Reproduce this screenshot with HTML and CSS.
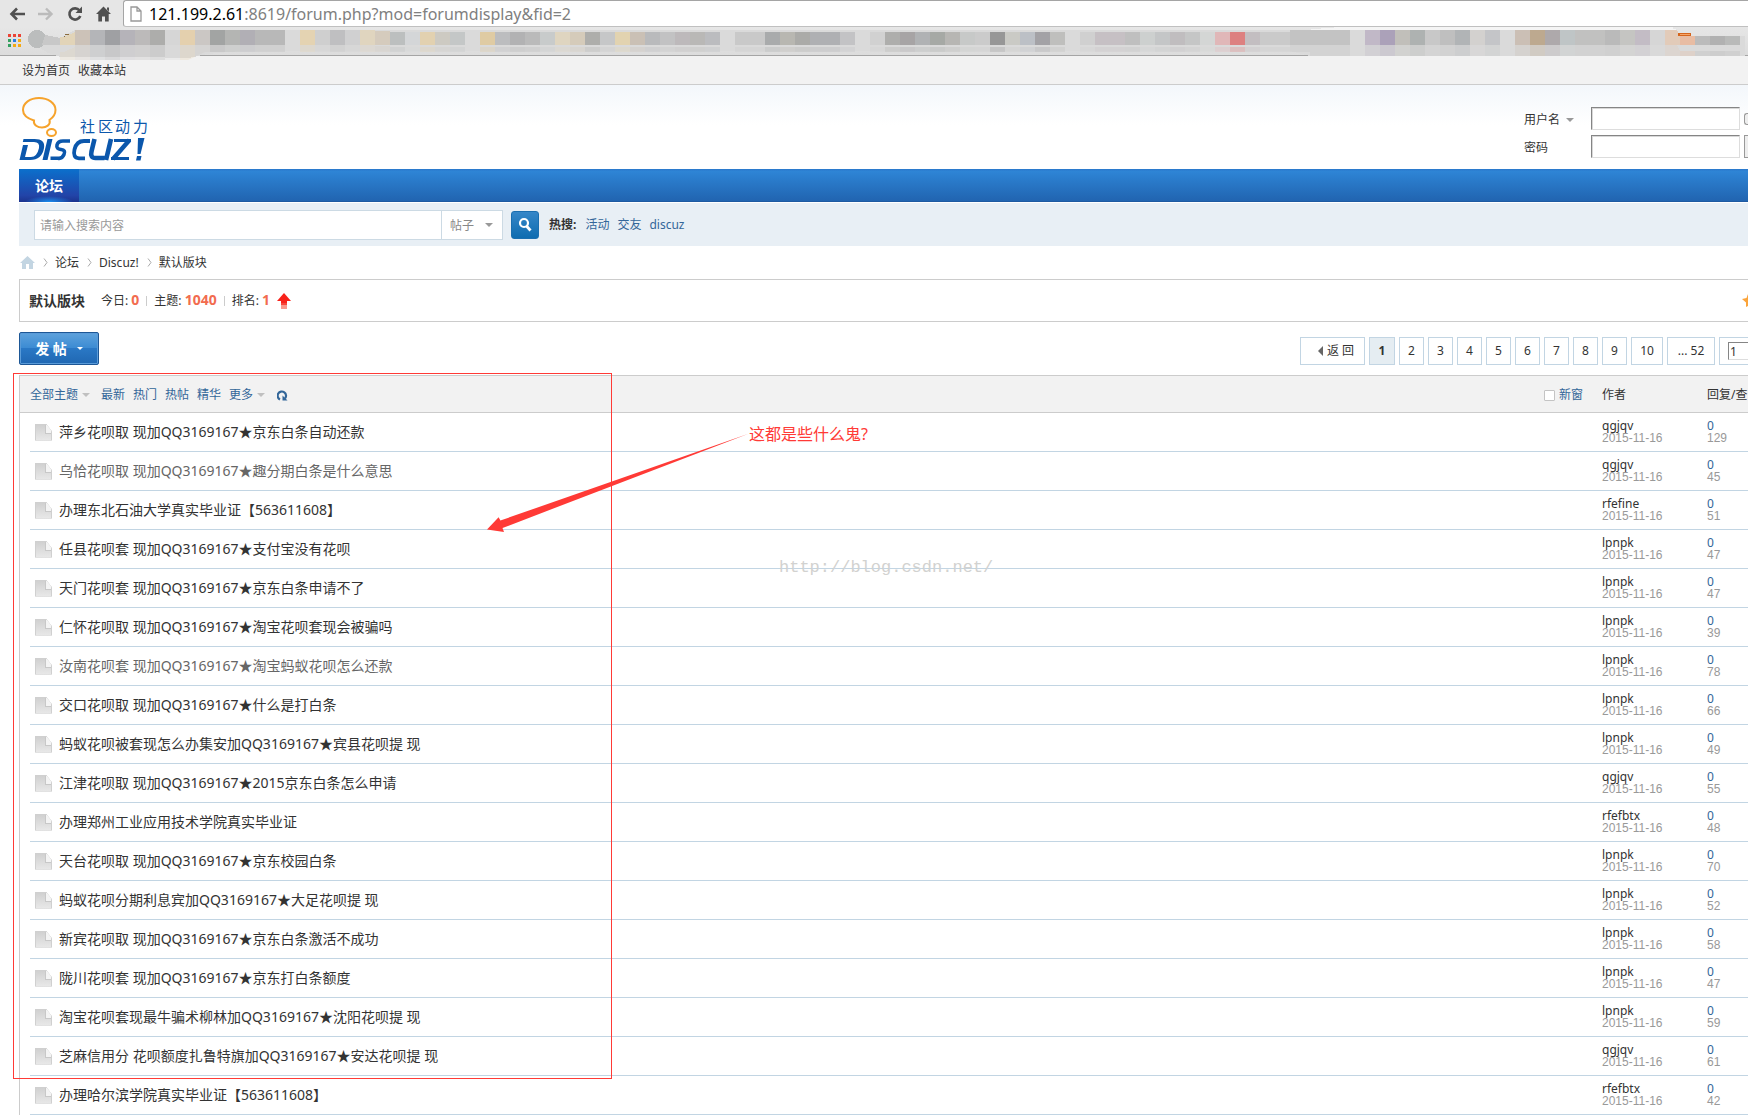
FILE: index.html
```html
<!DOCTYPE html>
<html lang="zh-CN">
<head>
<meta charset="utf-8">
<title>默认版块 - Discuz!</title>
<link rel="stylesheet" href="styles.css">
</head>
<body>
<header class="browser">
  <div class="toolbar">
    <div class="tools">
      <svg width="16" height="14" viewBox="0 0 16 14"><path d="M8 1.500L2.500 7L8 12.500M3 7h13" fill="none" stroke="#505050" stroke-width="2.600"/></svg>
      <svg width="16" height="14" viewBox="0 0 16 14"><path d="M8 1.500L13.500 7L8 12.500M0 7h13" fill="none" stroke="#bbb" stroke-width="2.400"/></svg>
      <svg width="16" height="16" viewBox="0 0 16 16"><path d="M12.500 4.500A5.600 5.600 0 1 0 13.300 10" fill="none" stroke="#505050" stroke-width="2.600"/><path d="M15 0.500v6.500H8.500z" fill="#505050"/></svg>
      <svg width="15" height="16" viewBox="0 0 15 16"><path d="M7.500 0.500L15 8h-2.300v7.500H9v-5H6v5H2.300V8H0zM11 1.500h2v4l-2-2z" fill="#505050"/></svg>
    </div>
    <div class="address">
      <svg width="12" height="16" viewBox="0 0 12 16"><path d="M1 1h6l4 4v10H1zM7 1v4h4" fill="#fff" stroke="#999" stroke-width="1.300"/></svg>
      <span class="url"><b>121.199.2.61</b>:8619/forum.php?mod=forumdisplay&amp;fid=2</span>
    </div>
  </div>
  <div class="bookmarks">
    <svg class="apps" width="13" height="13" viewBox="0 0 13 13"><path fill="#ea4335" d="M0 0h3v3H0zM5 0h3v3H5zM10 0h3v3h-3z"/><path fill="#34a060" d="M0 5h3v3H0zM0 10h3v3H0z"/><path fill="#2a7de1" d="M5 5h3v3H5z"/><path fill="#f4a913" d="M10 5h3v3h-3zM5 10h3v3H5zM10 10h3v3h-3z"/></svg>
    <svg class="mosaic" width="1748" height="34" viewBox="0 27 1748 34" shape-rendering="crispEdges">
      <path fill="#dadada" d="M35 45h25v-7l15-8h1230l120-1h228l25 7h67v20H1310l-20-5H240l-33 3-18 4h-24v-1H60l-12-4z"/>
      <path fill="#f5f5f5" d="M1354 26h319v3l5 1h-370l6-1z"/>
      <circle cx="37" cy="39" r="9" fill="#bbbdbd"/><path fill="#c8c8c8" d="M45 35l15 3v7H42z"/><path fill="#8a6d40" d="M65 34h6v1h-6zM64 36h2v2h-2z"/>
      <g id="tiles">
        <path fill="#e2d4b8" d="M60 37h4l11-5v13H60z"/><path fill="#ccc2b8" d="M75 30h15v15H75z"/><path fill="#b4b5b8" d="M90 30h15v15H90z"/><path fill="#9fa0a3" d="M105 30h15v15h-15z"/><path fill="#b5b3b9" d="M120 30h15v15h-15z"/><path fill="#bcbaba" d="M135 30h15v15h-15z"/><path fill="#adadab" d="M150 30h15v15h-15z"/><path fill="#d6d6d6" d="M165 30h15v15h-15z"/><path fill="#e4d0ae" d="M180 30h15v15h-15z"/><path fill="#cbc7c4" d="M195 30h15v15h-15z"/><path fill="#a2a4a3" d="M210 30h15v15h-15z"/><path fill="#b4b5b3" d="M225 30h15v15h-15z"/><path fill="#b1afb5" d="M240 30h15v15h-15z"/><path fill="#b8b8b8" d="M255 30h30v15h-30z"/><path fill="#e4d3b2" d="M300 30h15v15h-15z"/><path fill="#cfcfcf" d="M315 30h15v15h-15z"/><path fill="#bfbfc1" d="M330 30h15v15h-15z"/><path fill="#d0d0d1" d="M345 30h15v15h-15z"/><path fill="#e0d5bf" d="M360 30h15v15h-15z"/><path fill="#d5cbbd" d="M375 31h15v14h-15z"/>
        <path fill="#bcbfbf" d="M390 32h15v13h-15z"/><path fill="#d4d6d8" d="M405 32h15v13h-15z"/><path fill="#e2d1b0" d="M420 32h15v13h-15z"/><path fill="#cdcac2" d="M435 32h15v13h-15z"/><path fill="#c4c7c7" d="M450 32h15v13h-15z"/><path fill="#dfcba3" d="M480 32h15v13h-15z"/><path fill="#bcbdbf" d="M495 32h15v13h-15z"/><path fill="#b2b2b3" d="M510 32h15v13h-15z"/><path fill="#bababa" d="M525 32h15v13h-15z"/><path fill="#c8cbcb" d="M540 32h15v13h-15z"/><path fill="#dfd5c0" d="M555 32h15v13h-15z"/><path fill="#d5cbba" d="M570 32h15v13h-15z"/><path fill="#aeaeab" d="M585 32h15v13h-15z"/>
        <path fill="#c6c7c8" d="M600 32h15v13h-15z"/><path fill="#e2d3b0" d="M615 32h15v13h-15z"/><path fill="#cac0b5" d="M630 32h15v13h-15z"/><path fill="#b9babc" d="M645 32h15v13h-15z"/><path fill="#c2c2c3" d="M660 32h15v13h-15z"/><path fill="#bdb9bb" d="M675 32h15v13h-15z"/><path fill="#b9b8b6" d="M690 32h15v13h-15z"/><path fill="#bbbcbf" d="M705 32h15v13h-15z"/><path fill="#c9c9c9" d="M735 32h30v13h-30z"/><path fill="#a9abac" d="M765 32h15v13h-15z"/><path fill="#b8b7b1" d="M780 32h15v13h-15z"/><path fill="#ababa8" d="M795 32h15v13h-15z"/><path fill="#afb0b3" d="M810 32h30v13h-30z"/><path fill="#c3c3c5" d="M840 32h15v13h-15z"/><path fill="#d1d1d1" d="M870 32h15v13h-15z"/><path fill="#aeaeac" d="M885 32h15v13h-15z"/><path fill="#a7a4a5" d="M900 32h15v13h-15z"/><path fill="#b0b2b4" d="M915 32h15v13h-15z"/><path fill="#a6a9a5" d="M930 32h15v13h-15z"/><path fill="#b7b6b3" d="M945 32h15v13h-15z"/><path fill="#c7c9c8" d="M960 32h15v13h-15z"/><path fill="#cbcbcb" d="M975 32h15v13h-15z"/><path fill="#979797" d="M990 32h15v13h-15z"/>
        <path fill="#cacac5" d="M1005 32h15v13h-15z"/><path fill="#bcc0c6" d="M1020 32h15v13h-15z"/><path fill="#a3a2a6" d="M1035 32h15v13h-15z"/><path fill="#bfbfbd" d="M1050 32h15v13h-15z"/><path fill="#d0d0d0" d="M1080 32h15v13h-15z"/><path fill="#c6c0c4" d="M1095 32h30v13h-30z"/><path fill="#bfbfbf" d="M1125 32h15v13h-15z"/><path fill="#cdd0cf" d="M1140 32h15v13h-15z"/><path fill="#c4c6c7" d="M1155 32h15v13h-15z"/><path fill="#c0bdbf" d="M1170 32h15v13h-15z"/><path fill="#c5c6c6" d="M1185 32h15v13h-15z"/><path fill="#d4d6d5" d="M1200 32h15v13h-15z"/><path fill="#e0b7b8" d="M1215 32h15v13h-15z"/><path fill="#dd8080" d="M1230 32h15v13h-15z"/><path fill="#c3bec1" d="M1245 32h15v13h-15z"/><path fill="#cacaca" d="M1260 32h30v13h-30z"/><path fill="#c3c3c3" d="M1290 30h60v15h-60z"/>
        <path fill="#c1b8c7" d="M1365 30h15v15h-15z"/><path fill="#aba1b9" d="M1380 30h15v15h-15z"/><path fill="#c1bfba" d="M1395 30h15v15h-15z"/><path fill="#aeb2b1" d="M1410 30h15v15h-15z"/><path fill="#c8c8c8" d="M1425 30h15v15h-15z"/><path fill="#bfbfbf" d="M1440 30h15v15h-15z"/><path fill="#b1b4b6" d="M1455 30h15v15h-15z"/><path fill="#d3d1cf" d="M1470 30h15v15h-15z"/><path fill="#c4c5c8" d="M1485 30h15v15h-15z"/><path fill="#cbbfb5" d="M1515 30h15v15h-15z"/><path fill="#bda98f" d="M1530 30h15v15h-15z"/><path fill="#aea9ab" d="M1545 30h15v15h-15z"/><path fill="#bfc5c6" d="M1560 30h15v15h-15z"/><path fill="#c1c1c0" d="M1575 30h30v15h-30z"/><path fill="#bababa" d="M1605 30h15v15h-15z"/><path fill="#c5c5c2" d="M1620 30h15v15h-15z"/><path fill="#c3bcc5" d="M1635 30h15v15h-15z"/><path fill="#d6d6d6" d="M1650 30h15v15h-15z"/><path fill="#e2cbb9" d="M1665 30h12l3 6v9h-15z"/><path fill="#e8bca3" d="M1680 36h15v9h-15z"/><path fill="#bbb" d="M1695 36h15v9h-15z"/><path fill="#b1b1b1" d="M1710 36h15v9h-15z"/><path fill="#b9bab9" d="M1725 36h15v9h-15z"/>
      </g>
      <clipPath id="lower"><path d="M60 45h1688v11H1310v-4H205l-17 8H60z"/></clipPath>
      <g clip-path="url(#lower)"><use href="#tiles" y="15" opacity="0.3"/></g>
      <path fill="#d5651d" d="M1678 33h13v3h-13z"/><path fill="#f5a56a" d="M1680 34h10v1h-10z"/>
    </svg>
  </div>
</header>

<nav class="topbar"><a href="#">设为首页</a><a href="#">收藏本站</a></nav>

<header class="masthead">
  <a href="#" class="logo" aria-label="Discuz! 社区动力">
    <svg width="130" height="68" viewBox="0 0 130 68">
      <g fill="none" stroke="#f6a32c" stroke-width="2"><path d="M15 23.500C7 21 4 17 4 13C4 6 11 1 20 1S36.500 6 36.500 13C36.500 17 34 20.500 30.500 23C32 28 27 30.500 23 30.500S14 28 15 23.500z"/><ellipse cx="32.500" cy="35.500" rx="4.500" ry="3.500"/></g>
      <text class="logo-cn" x="61" y="35">社</text><text class="logo-cn" x="79" y="35">区</text><text class="logo-cn" x="96" y="35">动</text><text class="logo-cn" x="114" y="35">力</text>
      <path fill="#0b57ac" fill-rule="evenodd" d="M4.500 42h11q11 0 9.500 9q-2 12-14 12H0.500L4 48h5l-3 12h6q6 0 8-9q1-6-5-6H3.800zM28.500 42h5l-5 21h-5zM119 41h6.500l-4 16h-3zM118 59h4.500l-1 4.500H117z"/>
      <g fill="none" stroke="#0b57ac"><path stroke-width="3.600" d="M51 44h-7q-5 0-6 4t4 4.500t3 5t-6 3.700h-7.500"/><path stroke-width="3.800" d="M71 44h-6q-7.500 0-9.500 8.500t4.500 8.800h6"/><path stroke-width="4.600" d="M75.500 42l-3 12.500q-1.500 6.500 4 6.500h9M92 42l-5 21"/><path stroke-width="3" d="M95 43.500h17M92 61.500h18"/><path stroke-width="4.400" d="M110.500 43L94 62"/></g>
    </svg>
  </a>
  <form class="login">
    <div class="login-row"><label for="user">用户名<i class="caret"></i></label><input id="user" type="text"><button type="button" class="peek peek-check" aria-label="自动登录"></button></div>
    <div class="login-row"><label for="pass">密码</label><input id="pass" type="password"><button type="button" class="peek" aria-label="登录"></button></div>
  </form>
</header>

<main class="page">
  <nav class="mainnav"><a href="#">论坛</a></nav>
  <form class="search">
    <div class="searchbox">
      <input type="text" placeholder="请输入搜索内容" aria-label="搜索">
      <div class="scope"><select aria-label="范围"><option>帖子</option></select><i class="caret"></i></div>
    </div>
    <button type="button" class="go" aria-label="搜索"><svg width="16" height="16" viewBox="0 0 16 16"><circle cx="7" cy="6" r="4" fill="none" stroke="#fff" stroke-width="2.200"/><path d="M9.500 9l4 4.500" stroke="#fff" stroke-width="2.800"/></svg></button>
    <div class="hot"><b>热搜:</b><a href="#">活动</a><a href="#">交友</a><a href="#">discuz</a></div>
  </form>
  <nav class="crumbs">
    <a href="#" aria-label="首页"><svg width="15" height="13" viewBox="0 0 15 13"><path d="M7.500 0L15 7h-2v6H9V8H6v5H2V7H0z" fill="#c3d5e2"/></svg></a>
    <svg class="sep" width="5" height="9" viewBox="0 0 5 9"><path d="M1 0.500l3 4-3 4" fill="none" stroke="#aaa"/></svg>
    <a href="#">论坛</a>
    <svg class="sep" width="5" height="9" viewBox="0 0 5 9"><path d="M1 0.500l3 4-3 4" fill="none" stroke="#aaa"/></svg>
    <a href="#">Discuz!</a>
    <svg class="sep" width="5" height="9" viewBox="0 0 5 9"><path d="M1 0.500l3 4-3 4" fill="none" stroke="#aaa"/></svg>
    <a href="#">默认版块</a>
  </nav>
  <section class="board">
    <h1>默认版块</h1>
    <p class="stats"><span>今日: <b>0</b></span><i></i><span>主题: <b>1040</b></span><i></i><span>排名: <b>1</b></span>
      <svg width="14" height="16" viewBox="0 0 14 16"><path d="M7 0l7 8h-4v2H4V8H0z" fill="#f8221a"/><path d="M4 10h6v2H4z" fill="#f8453a"/><path d="M4 12h6v4H4z" fill="#f9988c"/></svg></p>
    <svg class="fav" width="6" height="14" viewBox="0 0 6 14"><path d="M6 0v12l-2 1 0-4.500L0 5l4.500-1z" fill="#fba43a"/></svg>
  </section>
  <div class="actions">
    <button type="button" class="post"><span>发 帖</span><i></i></button>
    <nav class="pages">
      <a href="#" class="back"><i></i>返 回</a><strong>1</strong><a href="#">2</a><a href="#">3</a><a href="#">4</a><a href="#">5</a><a href="#">6</a><a href="#">7</a><a href="#">8</a><a href="#">9</a><a href="#" class="ten">10</a><a href="#" class="last">... 52</a><span class="jump"><input type="text" value="1" aria-label="页码"></span>
    </nav>
  </div>
  <div class="threads">
    <table>
      <colgroup><col class="c-edge"><col><col class="c-by"><col class="c-num"></colgroup>
      <thead><tr><th></th><th>
        <div class="filters"><a href="#" class="drop all">全部主题<i class="caret"></i></a><a href="#">最新</a><a href="#">热门</a><a href="#">热帖</a><a href="#">精华</a><a href="#" class="drop">更多<i class="caret"></i></a>
          <a href="#" class="refresh" aria-label="刷新"><svg width="11" height="11" viewBox="0 0 11 11"><path d="M3 9.500A4.200 4.200 0 1 1 8 8.500" fill="none" stroke="#369" stroke-width="2.200"/><path d="M5.500 5.500v5h5z" fill="#369"/></svg></a>
          <label class="newwin"><input type="checkbox">新窗</label></div>
      </th><th>作者</th><th>回复/查</th></tr></thead>
      <tbody>
        <tr><td></td><td><a href="#">萍乡花呗取 现加QQ3169167★京东白条自动还款</a></td><td><a href="#">qgjqv</a><small>2015-11-16</small></td><td><a href="#">0</a><small>129</small></td></tr>
        <tr class="read"><td></td><td><a href="#">乌恰花呗取 现加QQ3169167★趣分期白条是什么意思</a></td><td><a href="#">qgjqv</a><small>2015-11-16</small></td><td><a href="#">0</a><small>45</small></td></tr>
        <tr><td></td><td><a href="#">办理东北石油大学真实毕业证【563611608】</a></td><td><a href="#">rfefine</a><small>2015-11-16</small></td><td><a href="#">0</a><small>51</small></td></tr>
        <tr><td></td><td><a href="#">任县花呗套 现加QQ3169167★支付宝没有花呗</a></td><td><a href="#">lpnpk</a><small>2015-11-16</small></td><td><a href="#">0</a><small>47</small></td></tr>
        <tr><td></td><td><a href="#">天门花呗套 现加QQ3169167★京东白条申请不了</a></td><td><a href="#">lpnpk</a><small>2015-11-16</small></td><td><a href="#">0</a><small>47</small></td></tr>
        <tr><td></td><td><a href="#">仁怀花呗取 现加QQ3169167★淘宝花呗套现会被骗吗</a></td><td><a href="#">lpnpk</a><small>2015-11-16</small></td><td><a href="#">0</a><small>39</small></td></tr>
        <tr class="read"><td></td><td><a href="#">汝南花呗套 现加QQ3169167★淘宝蚂蚁花呗怎么还款</a></td><td><a href="#">lpnpk</a><small>2015-11-16</small></td><td><a href="#">0</a><small>78</small></td></tr>
        <tr><td></td><td><a href="#">交口花呗取 现加QQ3169167★什么是打白条</a></td><td><a href="#">lpnpk</a><small>2015-11-16</small></td><td><a href="#">0</a><small>66</small></td></tr>
        <tr><td></td><td><a href="#">蚂蚁花呗被套现怎么办集安加QQ3169167★宾县花呗提 现</a></td><td><a href="#">lpnpk</a><small>2015-11-16</small></td><td><a href="#">0</a><small>49</small></td></tr>
        <tr><td></td><td><a href="#">江津花呗取 现加QQ3169167★2015京东白条怎么申请</a></td><td><a href="#">qgjqv</a><small>2015-11-16</small></td><td><a href="#">0</a><small>55</small></td></tr>
        <tr><td></td><td><a href="#">办理郑州工业应用技术学院真实毕业证</a></td><td><a href="#">rfefbtx</a><small>2015-11-16</small></td><td><a href="#">0</a><small>48</small></td></tr>
        <tr><td></td><td><a href="#">天台花呗取 现加QQ3169167★京东校园白条</a></td><td><a href="#">lpnpk</a><small>2015-11-16</small></td><td><a href="#">0</a><small>70</small></td></tr>
        <tr><td></td><td><a href="#">蚂蚁花呗分期利息宾加QQ3169167★大足花呗提 现</a></td><td><a href="#">lpnpk</a><small>2015-11-16</small></td><td><a href="#">0</a><small>52</small></td></tr>
        <tr><td></td><td><a href="#">新宾花呗取 现加QQ3169167★京东白条激活不成功</a></td><td><a href="#">lpnpk</a><small>2015-11-16</small></td><td><a href="#">0</a><small>58</small></td></tr>
        <tr><td></td><td><a href="#">陇川花呗套 现加QQ3169167★京东打白条额度</a></td><td><a href="#">lpnpk</a><small>2015-11-16</small></td><td><a href="#">0</a><small>47</small></td></tr>
        <tr><td></td><td><a href="#">淘宝花呗套现最牛骗术柳林加QQ3169167★沈阳花呗提 现</a></td><td><a href="#">lpnpk</a><small>2015-11-16</small></td><td><a href="#">0</a><small>59</small></td></tr>
        <tr><td></td><td><a href="#">芝麻信用分 花呗额度扎鲁特旗加QQ3169167★安达花呗提 现</a></td><td><a href="#">qgjqv</a><small>2015-11-16</small></td><td><a href="#">0</a><small>61</small></td></tr>
        <tr><td></td><td><a href="#">办理哈尔滨学院真实毕业证【563611608】</a></td><td><a href="#">rfefbtx</a><small>2015-11-16</small></td><td><a href="#">0</a><small>42</small></td></tr>
      </tbody>
    </table>
    <div class="marker"></div>
    <svg class="arrow" width="264" height="102" viewBox="486 432 264 102"><path d="M487 529.500L498.600 517.300L500.400 520.500L748.500 433.700L502.500 528L504 532z" fill="#ff3a36"/></svg>
    <p class="remark">这都是些什么鬼?</p>
    <p class="watermark">http://blog.csdn.net/</p>
  </div>
</main>
</body>
</html>
```
FILE: styles.css
```css
* { box-sizing: border-box; }
html { overflow: hidden; }
body {
  margin: 0;
  background: #fff;
  color: #333;
  font: 12px/16px "Noto Sans", "Noto Sans CJK SC", sans-serif;
  overflow: hidden;
}
a { color: inherit; text-decoration: none; }
p, h1 { margin: 0; }
svg { display: block; flex: none; }
button, input, select { font: inherit; color: inherit; margin: 0; }
.caret {
  display: inline-block;
  border: 4px solid transparent;
  border-top-color: #999;
  border-bottom: 0;
}

/* browser chrome */
.toolbar { display: flex; height: 27px; background: #e6e6e6; }
.tools { display: flex; align-items: center; gap: 13px; width: 123px; padding-left: 9px; flex: none; }
.address {
  flex: 1;
  display: flex;
  align-items: center;
  gap: 7px;
  padding-left: 6px;
  background: #fff;
  border: solid #a5a5a5;
  border-width: 1px 0 1px 1px;
  border-bottom-color: #c0c0c0;
  border-radius: 3px 0 0 3px;
}
.url { font-size: 16px; line-height: 24px; color: #808080; white-space: nowrap; }
.url b { font-weight: 400; color: #000; }
.bookmarks {
  position: relative;
  height: 29px;
  padding: 7px 8px;
  background: linear-gradient(#e6e6e6, #dcdcdc);
  border-bottom: 1px solid #a5a5a5;
}
.mosaic { position: absolute; left: 0; top: 0; z-index: 1; }

.topbar {
  display: flex;
  gap: 8px;
  align-items: center;
  height: 29px;
  padding: 2px 0 0 22px;
  background: #f2f2f2;
  border-bottom: 1px solid #ccc;
}

.masthead {
  display: flex;
  justify-content: space-between;
  height: 84px;
  padding-left: 19px;
  background: linear-gradient(#f3f7fb, #fff 40px);
}
.logo { padding-top: 12px; }
.logo-cn { font: 15px "Noto Sans CJK SC", sans-serif; fill: #0b57ac; }
.login { display: flex; flex-direction: column; gap: 5px; padding-top: 22px; }
.login-row { display: flex; align-items: center; gap: 4px; height: 23px; }
.login label { display: flex; align-items: center; gap: 6px; width: 63px; padding-top: 2px; }
.login input {
  width: 149px;
  height: 23px;
  background: #fff;
  border: 1px solid;
  border-color: #858585 #ddd #ddd #858585;
  box-shadow: inset 1px 1px #d8d8d8;
}
.peek { width: 4px; height: 23px; padding: 0; border: 1px solid #999; border-right: 0; background: #eee; }
.peek-check { height: 12px; border-radius: 3px 0 0 3px; }

.page { padding-left: 19px; }
.mainnav {
  height: 34px;
  display: flex;
  background: linear-gradient(#2b7acd, #2b7acd 1px, #2e85d6 2px, #2164b0 32px, #1b4f92 33px, #fff 33px);
}
.mainnav a {
  width: 60px;
  height: 33px;
  background: radial-gradient(ellipse 24px 6px at 50% 100%, #1a8ff0, transparent), linear-gradient(#0b70cc, #2244a8 80%, #1c348e);
  color: #fff;
  font-size: 14px;
  font-weight: 700;
  line-height: 34px;
  text-align: center;
}

.search { display: flex; align-items: center; height: 43px; padding-left: 15px; background: #e8eff5; }
.searchbox { display: flex; width: 469px; height: 30px; background: #fff; border: 1px solid #ccdae4; }
.searchbox input { flex: 1; min-width: 0; padding: 2px 5px 0; border: 0; background: none; }
.searchbox input::placeholder { color: #999; opacity: 1; }
.scope { display: flex; align-items: center; width: 61px; padding: 0 9px 0 8px; border-left: 1px solid #ccdae4; }
.scope select { flex: 1; appearance: none; border: 0; background: none; color: #888; padding: 2px 0 0; }
.go {
  display: flex;
  align-items: center;
  justify-content: center;
  width: 28px;
  height: 28px;
  margin: 0 10px 0 8px;
  padding: 0;
  border: 1px solid #1b6fb0;
  border-radius: 3px;
  background: linear-gradient(#3687c8, #0e6cb0);
}
.hot { display: flex; gap: 8px; color: #369; }
.hot b { color: #333; margin-right: 1px; }

.crumbs { display: flex; align-items: center; gap: 7px; height: 33px; }
.crumbs svg { margin-left: 1px; }

.board { display: flex; align-items: center; height: 43px; padding-left: 9px; border: 1px solid #ccc; border-right: 0; }
.board h1 { font-size: 14px; line-height: 20px; margin-right: 16px; }
.stats { display: flex; align-items: center; flex: 1; }
.stats b { color: #f26c4f; font-size: 14px; }
.stats > i { width: 1px; height: 10px; margin: 0 7px; background: #ccc; }
.stats svg { margin-left: 7px; }

.actions { display: flex; justify-content: space-between; height: 53px; padding-top: 10px; }
.post {
  display: flex;
  align-items: center;
  justify-content: center;
  gap: 10px;
  width: 80px;
  height: 33px;
  padding: 0;
  color: #fff;
  font-size: 14px;
  font-weight: 700;
  border: 1px solid #1d5796;
  border-radius: 2px;
  box-shadow: inset 0 0 0 1px #5a9bd8;
  background: linear-gradient(#5ea2dc, #3c8bd3 48%, #2a78c5 50%, #2067b2);
}
.post i { border: 3px solid transparent; border-top-color: #fff; border-bottom: 0; }
.pages { display: flex; gap: 4px; padding-top: 5px; }
.pages > * {
  display: flex;
  align-items: center;
  justify-content: center;
  width: 25px;
  height: 28px;
  border: 1px solid #c2d5e3;
  white-space: nowrap;
}
.pages strong { width: 26px; background: #e5edf2; }
.pages .back { width: 65px; gap: 4px; padding-left: 7px; }
.back i { border: 5px solid transparent; border-right-color: #666; border-left: 0; }
.pages .ten { width: 32px; }
.pages .last { width: 48px; }
.pages .jump { width: 29px; padding-left: 8px; border-right: 0; }
.jump input {
  width: 20px;
  height: 18px;
  padding: 0 1px;
  background: #fff;
  border: 1px solid;
  border-color: #858585 #ddd #ddd #858585;
  border-right: 0;
}

.threads { position: relative; border-top: 1px solid #ccc; border-left: 1px solid #ccc; }
table { width: 100%; table-layout: fixed; border-collapse: separate; border-spacing: 0; }
.c-edge { width: 10px; }
.c-by { width: 105px; }
.c-num { width: 41px; }
th, td { padding: 0; text-align: left; font-weight: 400; white-space: nowrap; }
th { height: 37px; padding-top: 2px; background: #f2f2f2; border-bottom: 1px solid #ccc; }
.filters { display: flex; align-items: center; gap: 8px; color: #369; }
.drop { display: flex; align-items: center; gap: 4px; }
.drop .caret { border-top-color: #c0c0c0; }
.all { margin-right: 3px; }
.refresh { margin-left: 4px; }
.newwin { display: flex; align-items: center; gap: 4px; margin-left: auto; margin-right: 19px; }
.newwin input { appearance: none; width: 11px; height: 11px; background: #fff; border: 1px solid #c4c4c4; border-radius: 1px; }
td { height: 39px; border-bottom: 1px solid #c2d5e3; line-height: 13px; }
td:first-child { border: 0; }
td:nth-child(2) { padding-left: 5px; font-size: 14px; line-height: 20px; }
td:nth-child(2) a { display: flex; align-items: center; gap: 7px; }
/* document icon with a folded corner */
td:nth-child(2) a::before {
  content: "";
  width: 17px;
  height: 17px;
  background:
    linear-gradient(#f4f4f4, #f4f4f4) 11px 0 / 6px 9px no-repeat,
    linear-gradient(#c8c8c8, #c8c8c8) 10px 0 / 7px 10px no-repeat,
    linear-gradient(#cfcfcf, #e9e9e9);
  box-shadow: inset 0 0 0 1px #d0d0d0;
  clip-path: polygon(0 0, 11px 0, 17px 8px, 17px 17px, 0 17px);
}
td a, td small { display: block; }
td small { font: 12px/13px "Liberation Sans", sans-serif; color: #999; }
td:last-child a { color: #369; }
.read td:nth-child(2) { color: #666; }

/* annotations drawn over the list */
.marker { position: absolute; left: -7px; top: -3px; width: 599px; height: 706px; border: 1px solid #ff3a36; }
.arrow { position: absolute; left: 466px; top: 56px; }
.remark { position: absolute; left: 729px; top: 46px; font-size: 16px; line-height: 24px; color: #ff3a36; }
.watermark { position: absolute; left: 759px; top: 180px; font: 17px/24px "Liberation Mono", monospace; color: #d2d2d0; }
```
